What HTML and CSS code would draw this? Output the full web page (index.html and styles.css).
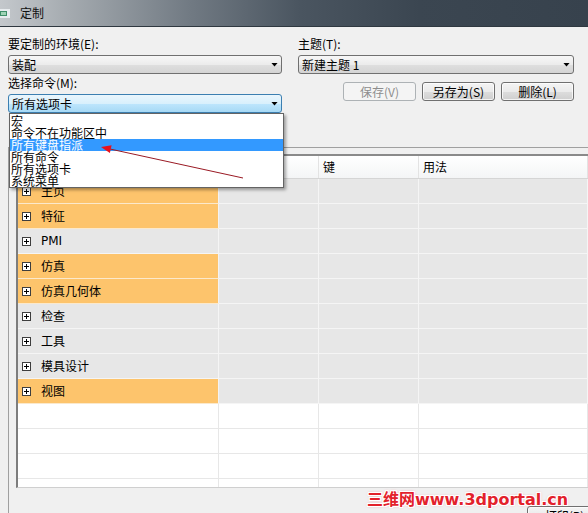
FILE: index.html
```html
<!DOCTYPE html>
<html lang="zh-CN">
<head>
<meta charset="utf-8">
<title>定制</title>
<link rel="stylesheet" href="styles.css">
</head>
<body>
<div class="dialog">
  <div class="titlebar">
    <svg class="app-icon" width="10" height="9" viewBox="0 0 10 9"><rect x="0" y="0" width="10" height="9" fill="#e8ecef"/><rect x="0" y="2" width="7" height="5" fill="#3f8f6a"/><rect x="1" y="3" width="5" height="3" fill="#9fd3b5"/></svg>
    <span class="title">定制</span>
  </div>
  <div class="main">
    <div class="top">
      <div class="col">
        <div class="field-label">要定制的环境(E):</div>
        <div class="combo"><span class="combo-text">装配</span><span class="caret"></span></div>
        <div class="field-label second">选择命令(M):</div>
        <div class="combo combo-hot"><span class="combo-text">所有选项卡</span><span class="caret"></span></div>
      </div>
      <div class="col">
        <div class="field-label">主题(T):</div>
        <div class="combo"><span class="combo-text">新建主题 1</span><span class="caret"></span></div>
        <div class="buttons">
          <div class="btn disabled">保存(V)</div>
          <div class="btn">另存为(S)</div>
          <div class="btn">删除(L)</div>
        </div>
      </div>
    </div>
    <div class="group">
      <div class="table">
        <div class="head">
          <div class="hcell"></div>
          <div class="hcell"></div>
          <div class="hcell">键</div>
          <div class="hcell">用法</div>
        </div>
        <div class="tbody">
          <div class="row"><div class="cell name hl"><span class="plus"></span>主页</div><div class="cell"></div><div class="cell"></div><div class="cell"></div></div>
          <div class="row"><div class="cell name hl"><span class="plus"></span>特征</div><div class="cell"></div><div class="cell"></div><div class="cell"></div></div>
          <div class="row"><div class="cell name"><span class="plus"></span><span class="latin">PMI</span></div><div class="cell"></div><div class="cell"></div><div class="cell"></div></div>
          <div class="row"><div class="cell name hl"><span class="plus"></span>仿真</div><div class="cell"></div><div class="cell"></div><div class="cell"></div></div>
          <div class="row"><div class="cell name hl"><span class="plus"></span>仿真几何体</div><div class="cell"></div><div class="cell"></div><div class="cell"></div></div>
          <div class="row"><div class="cell name"><span class="plus"></span>检查</div><div class="cell"></div><div class="cell"></div><div class="cell"></div></div>
          <div class="row"><div class="cell name"><span class="plus"></span>工具</div><div class="cell"></div><div class="cell"></div><div class="cell"></div></div>
          <div class="row"><div class="cell name"><span class="plus"></span>模具设计</div><div class="cell"></div><div class="cell"></div><div class="cell"></div></div>
          <div class="row"><div class="cell name hl"><span class="plus"></span>视图</div><div class="cell"></div><div class="cell"></div><div class="cell"></div></div>
          <div class="row empty"><div class="cell"></div><div class="cell"></div><div class="cell"></div><div class="cell"></div></div>
          <div class="row empty"><div class="cell"></div><div class="cell"></div><div class="cell"></div><div class="cell"></div></div>
          <div class="row empty"><div class="cell"></div><div class="cell"></div><div class="cell"></div><div class="cell"></div></div>
          <div class="row empty"><div class="cell"></div><div class="cell"></div><div class="cell"></div><div class="cell"></div></div>
        </div>
      </div>
      <div class="footer"><div class="btn print">打印(P)</div></div>
    </div>
  </div>

  <div class="dropdown">
    <div class="menu-item first">宏</div>
    <div class="menu-item">命令不在功能区中</div>
    <div class="menu-item selected">所有键盘指派</div>
    <div class="menu-item">所有命令</div>
    <div class="menu-item">所有选项卡</div>
    <div class="menu-item">系统菜单</div>
  </div>

  <svg class="arrow" width="588" height="513" viewBox="0 0 588 513">
    <line x1="243" y1="178" x2="110" y2="149" stroke="#9a1a24" stroke-width="1"/>
    <polygon points="101,147 111.6,145.2 109.9,153" fill="#e8101c"/>
  </svg>

  <div class="watermark">三维网www.3dportal.cn</div>
</div>
</body>
</html>
```

FILE: styles.css
```css
* { box-sizing: border-box; }
html, body { margin: 0; padding: 0; }
body {
  background: #f0f0f0;
  font-family: "Noto Sans CJK SC", "Noto Sans", sans-serif;
  font-size: 12px;
  color: #000;
}
.dialog {
  position: relative;
  width: 588px;
  height: 513px;
  overflow: hidden;
  background: #f0f0f0;
}

/* title bar */
.titlebar {
  height: 27px;
  display: flex;
  align-items: center;
  gap: 10px;
  background: linear-gradient(90deg, #c4c8cc 0, #a4aaaf 70px, #717a83 190px, #4a5560 300px, #3b4651 420px, #37424d 100%);
  border-bottom: 1px solid #2f3840;
}
.app-icon { display: block; flex: none; }
.title { font-size: 12px; line-height: 14px; color: #111; }

/* top form */
.main { padding-left: 8px; }
.top {
  display: grid;
  grid-template-columns: 274px 276px;
  column-gap: 16px;
  padding-top: 9px;
}
.col { display: flex; flex-direction: column; }
.field-label {
  height: 16px;
  line-height: 16px;
  margin-bottom: 3px;
  white-space: nowrap;
}
.field-label.second { margin-top: 1px; }
.combo {
  height: 19px;
  border: 1px solid #707070;
  border-radius: 3px;
  background: linear-gradient(#f7f7f7 0, #ececec 50%, #dfdfdf 51%, #d4d4d4 100%);
  display: flex;
  align-items: center;
  justify-content: space-between;
  padding: 0 3px 0 3px;
}
.combo-text { line-height: 17px; white-space: nowrap; }
.combo-hot {
  border-color: #3c7fb1;
  background: linear-gradient(#eaf6fd 0, #d9f0fc 50%, #bee6fd 51%, #a7d9f5 100%);
}
.caret {
  width: 7px;
  height: 4px;
  background: #000;
  clip-path: polygon(0 0, 100% 0, 50% 100%);
  flex: none;
}
.buttons {
  display: flex;
  justify-content: flex-end;
  gap: 6px;
  margin-top: 8px;
}
.btn {
  width: 73px;
  height: 19px;
  border: 1px solid #707070;
  border-radius: 3px;
  background: linear-gradient(#f4f4f4 0, #ebebeb 50%, #dddddd 51%, #cfcfcf 100%);
  box-shadow: inset 0 0 0 1px rgba(255,255,255,0.75);
  line-height: 17px;
  text-align: center;
  white-space: nowrap;
}
.btn.disabled {
  border-color: #adb2b5;
  background: #f4f4f4;
  box-shadow: none;
  color: #8d8d8d;
}

/* group + table */
.group {
  margin-top: 34px;
  border-top: 1px solid #a0a0a0;
  border-left: 1px solid #a0a0a0;
  padding: 6px 0 0 7px;
}
.table {
  border-left: 2px solid #7d7d7d;
  border-top: 2px solid #8a8a8a;
  border-bottom: 1px solid #cfcfcf;
  background: #fff;
}
.head {
  display: grid;
  grid-template-columns: 201px 100px 100px 1fr;
  height: 23px;
  border-bottom: 1px solid #d5d5d5;
  background: linear-gradient(#ffffff, #f4f5f6);
}
.hcell {
  border-right: 1px solid #e3e3e3;
  line-height: 22px;
  padding-left: 4px;
  white-space: nowrap;
}
.tbody {
  height: 308px;
  overflow: hidden;
}
.row {
  display: grid;
  grid-template-columns: 201px 100px 100px 1fr;
  height: 25px;
}
.cell {
  background: #e7e7e7;
  border-right: 1px solid #f5f5f5;
  border-bottom: 1px solid #f5f5f5;
}
.cell.name {
  display: flex;
  align-items: center;
  padding-left: 4px;
  gap: 10px;
  line-height: 24px;
  white-space: nowrap;
}
.cell.hl { background: #fdc46c; border-bottom-color: #fbe9cc; border-right-color: #f3f3f3; }
.row.empty .cell {
  background: #fff;
  border-right-color: #e7e7e7;
  border-bottom-color: #e7e7e7;
}
.plus {
  flex: none;
  width: 9px;
  height: 9px;
  border: 1px solid #3e3e3e;
  background:
    linear-gradient(#000, #000) center / 5px 1px no-repeat,
    linear-gradient(#000, #000) center / 1px 5px no-repeat,
    #fff;
}
.latin { font-family: "DejaVu Sans", "Noto Sans", sans-serif; font-size: 12px; }

.footer {
  display: flex;
  justify-content: flex-end;
  margin-top: 18px;
  margin-right: -14px;
}
.btn.print { width: 75px; line-height: 17px; }

/* dropdown list (overlay) */
.dropdown {
  position: absolute;
  left: 9px;
  top: 113px;
  width: 275px;
  height: 75px;
  border: 1px solid #646464;
  background: #fff;
  box-shadow: 2px 2px 3px rgba(0,0,0,0.35);
  padding-top: 1px;
  overflow: hidden;
}
.menu-item {
  height: 12px;
  line-height: 12px;
  padding-left: 1px;
  font-size: 12px;
  white-space: nowrap;
  color: #000;
}
.menu-item.selected { background: #3399ff; color: #fff; }

/* annotation overlays */
.arrow {
  position: absolute;
  left: 0;
  top: 0;
  pointer-events: none;
}
.watermark {
  position: absolute;
  left: 367px;
  top: 491px;
  font-family: "DejaVu Sans", "Noto Sans CJK SC", sans-serif;
  font-weight: bold;
  font-size: 16px;
  line-height: 17px;
  color: #e3212b;
  white-space: nowrap;
  text-shadow:
    1px 0 #fff, -1px 0 #fff, 0 1px #fff, 0 -1px #fff,
    1px 1px #fff, -1px -1px #fff, 1px -1px #fff, -1px 1px #fff,
    0 0 3px #f07a80;
}
```
